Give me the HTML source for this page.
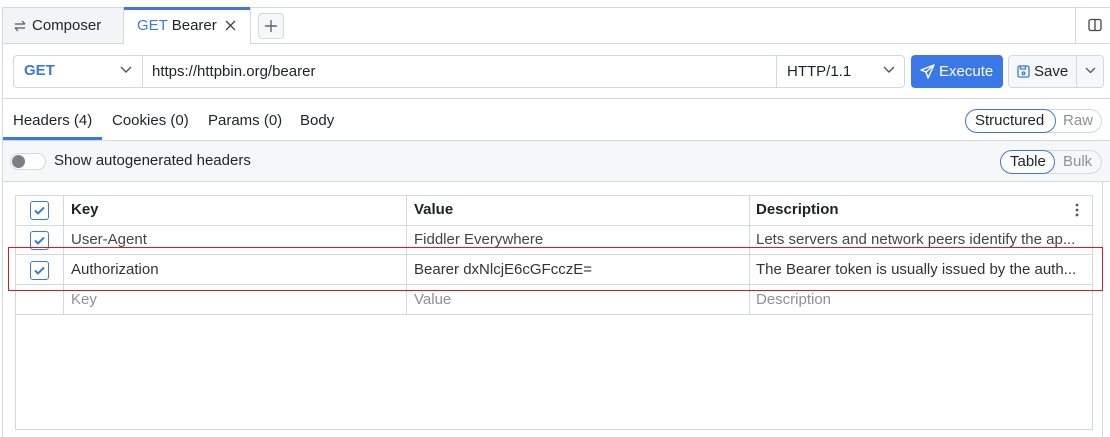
<!DOCTYPE html>
<html><head><style>
*{box-sizing:border-box;margin:0;padding:0}
body{width:1110px;height:437px;background:#fff;font-family:"Liberation Sans",sans-serif;font-size:15px;color:#1f2328;position:relative;overflow:hidden}
.a{position:absolute}
.hl{position:absolute;height:1px;background:#d3d7e0}
.vl{position:absolute;width:1px;background:#d3d7e0}
.t{position:absolute;white-space:nowrap;line-height:18px}
.cb{position:absolute;width:19px;height:19px;border:1.5px solid #3b78e7;border-radius:3px;background:#fff}
.cb svg{position:absolute;left:2px;top:2px}
.g{color:#8b919c}
</style></head><body>
<div class="vl" style="left:2px;top:7px;height:430px"></div>
<div class="hl" style="left:2px;top:7px;width:1108px"></div>
<div class="a" style="left:3px;top:8px;width:120px;height:36px;background:#f3f4f6"></div>
<div class="vl" style="left:123px;top:7px;height:37px"></div>
<div class="a" style="left:124px;top:7px;width:126px;height:3px;background:#3b78e7"></div>
<div class="vl" style="left:250px;top:7px;height:37px"></div>
<svg class="a" style="left:13px;top:19px" width="14" height="14" viewBox="0 0 14 14" fill="none" stroke="#555" stroke-width="1.2"><path d="M2 5h10M9 2l3 3M12 9H2M5 12L2 9"/></svg>
<div class="t" style="left:32px;top:17px">Composer</div>
<div class="t" style="left:137px;top:17px"><span style="color:#3b78e7">GET</span> Bearer</div>
<svg class="a" style="left:225px;top:20px" width="11" height="11" viewBox="0 0 11 11" stroke="#444" stroke-width="1.3"><path d="M1 1l9 9M10 1l-9 9"/></svg>
<div class="a" style="left:258px;top:13px;width:26px;height:26px;border:1px solid #d3d7e0;border-radius:4px;background:#f6f7f9"></div>
<svg class="a" style="left:264px;top:19px" width="14" height="14" viewBox="0 0 14 14" stroke="#666" stroke-width="1.4"><path d="M7 1v12M1 7h12"/></svg>
<div class="hl" style="left:250px;top:43px;width:860px"></div>
<div class="hl" style="left:2px;top:43px;width:121px"></div>
<div class="vl" style="left:1075px;top:7px;height:37px"></div>
<svg class="a" style="left:1088px;top:18px" width="14" height="14" viewBox="0 0 14 14" fill="none" stroke="#444" stroke-width="1.3"><rect x="1" y="1.5" width="12" height="11" rx="2"/><path d="M7 1.5v11"/></svg>
<div class="a" style="left:13px;top:55px;width:892px;height:33px;border:1px solid #d3d7e0;border-radius:4px"></div>
<div class="vl" style="left:142px;top:56px;height:32px"></div>
<div class="vl" style="left:776px;top:56px;height:32px"></div>
<div class="t" style="left:24px;top:62px;color:#3b78e7;font-weight:bold">GET</div>
<svg class="a" style="left:120px;top:66px" width="12" height="8" viewBox="0 0 12 8" fill="none" stroke="#555" stroke-width="1.4"><path d="M1 1l5 5 5-5"/></svg>
<div class="t" style="left:152px;top:63px">https://httpbin.org/bearer</div>
<div class="t" style="left:787px;top:63px">HTTP/1.1</div>
<svg class="a" style="left:883px;top:66px" width="12" height="8" viewBox="0 0 12 8" fill="none" stroke="#555" stroke-width="1.4"><path d="M1 1l5 5 5-5"/></svg>
<div class="a" style="left:911px;top:55px;width:92px;height:33px;background:#3b78e7;border-radius:4px"></div>
<svg class="a" style="left:920px;top:64px" width="15" height="15" viewBox="0 0 15 15" fill="none" stroke="#fff" stroke-width="1.4" stroke-linejoin="round"><path d="M14 1L1 6l5 2 2 6zM6 8l8-7"/></svg>
<div class="t" style="left:939px;top:63px;color:#fff">Execute</div>
<div class="a" style="left:1008px;top:55px;width:96px;height:33px;border:1px solid #d3d7e0;border-radius:4px;background:#f6f7f9"></div>
<div class="vl" style="left:1076px;top:56px;height:32px"></div>
<svg class="a" style="left:1017px;top:65px" width="13" height="13" viewBox="0 0 13 13" fill="none" stroke="#3b78e7" stroke-width="1.3"><rect x="1" y="1" width="11" height="11" rx="1.5"/><path d="M3.5 1v3h5V1"/><circle cx="6.5" cy="8.3" r="1.3"/></svg>
<div class="t" style="left:1034px;top:63px">Save</div>
<svg class="a" style="left:1085px;top:67px" width="11" height="7" viewBox="0 0 11 7" fill="none" stroke="#555" stroke-width="1.3"><path d="M1 1l4.5 4.5L10 1"/></svg>
<div class="hl" style="left:2px;top:98px;width:1108px"></div>
<div class="t" style="left:13px;top:112px">Headers (4)</div>
<div class="t" style="left:112px;top:112px">Cookies (0)</div>
<div class="t" style="left:208px;top:112px">Params (0)</div>
<div class="t" style="left:300px;top:112px">Body</div>
<div class="a" style="left:3px;top:137px;width:99px;height:3px;background:#3b78e7"></div>
<div class="a" style="left:965px;top:109px;width:137px;height:24px;border:1px solid #d3d7e0;border-radius:12px"></div>
<div class="a" style="left:965px;top:109px;width:91px;height:24px;border:1.5px solid #3b78e7;border-radius:12px;background:#fff"></div>
<div class="t" style="left:975px;top:112px">Structured</div>
<div class="t g" style="left:1063px;top:112px">Raw</div>
<div class="a" style="left:3px;top:140px;width:1107px;height:42px;background:#f6f7f9;border-top:1px solid #d3d7e0;border-bottom:1px solid #d3d7e0"></div>
<div class="a" style="left:10px;top:153px;width:36px;height:17px;border:1px solid #d3d7e0;border-radius:9px;background:#fff"></div>
<div class="a" style="left:12px;top:155px;width:13px;height:13px;border-radius:50%;background:#7a7f88"></div>
<div class="t" style="left:54px;top:152px">Show autogenerated headers</div>
<div class="a" style="left:1000px;top:150px;width:102px;height:24px;border:1px solid #d3d7e0;border-radius:12px"></div>
<div class="a" style="left:1000px;top:150px;width:55px;height:24px;border:1.5px solid #3b78e7;border-radius:12px;background:#fff"></div>
<div class="t" style="left:1010px;top:153px">Table</div>
<div class="t g" style="left:1063px;top:153px">Bulk</div>
<div class="a" style="left:15px;top:195px;width:1078px;height:235px;border:1px solid #d3d7e0"></div>
<div class="vl" style="left:1102px;top:182px;height:255px"></div>
<div class="hl" style="left:15px;top:225px;width:1078px"></div>
<div class="hl" style="left:15px;top:254px;width:1078px"></div>
<div class="hl" style="left:15px;top:284px;width:1078px"></div>
<div class="hl" style="left:15px;top:314px;width:1078px"></div>
<div class="vl" style="left:63px;top:195px;height:119px"></div>
<div class="vl" style="left:406px;top:195px;height:119px"></div>
<div class="vl" style="left:749px;top:195px;height:119px"></div>
<div class="cb" style="left:30px;top:201px"><svg width="13" height="13" viewBox="0 0 13 13" fill="none" stroke="#3b78e7" stroke-width="2"><path d="M2 6.5l3 3 6-6"/></svg></div>
<div class="cb" style="left:30px;top:231px"><svg width="13" height="13" viewBox="0 0 13 13" fill="none" stroke="#3b78e7" stroke-width="2"><path d="M2 6.5l3 3 6-6"/></svg></div>
<div class="cb" style="left:30px;top:261px"><svg width="13" height="13" viewBox="0 0 13 13" fill="none" stroke="#3b78e7" stroke-width="2"><path d="M2 6.5l3 3 6-6"/></svg></div>
<div class="t" style="left:71px;top:201px;font-weight:bold">Key</div>
<div class="t" style="left:414px;top:201px;font-weight:bold">Value</div>
<div class="t" style="left:756px;top:201px;font-weight:bold">Description</div>
<svg class="a" style="left:1075px;top:203px" width="4" height="14" viewBox="0 0 4 14" fill="#555"><circle cx="2" cy="2" r="1.4"/><circle cx="2" cy="7" r="1.4"/><circle cx="2" cy="12" r="1.4"/></svg>
<div class="t" style="left:71px;top:231px;color:#444">User-Agent</div>
<div class="t" style="left:414px;top:231px;color:#444">Fiddler Everywhere</div>
<div class="t" style="left:756px;top:231px;color:#444">Lets servers and network peers identify the ap...</div>
<div class="t" style="left:71px;top:261px;color:#333">Authorization</div>
<div class="t" style="left:414px;top:261px;color:#333">Bearer dxNlcjE6cGFcczE=</div>
<div class="t" style="left:756px;top:261px;color:#333">The Bearer token is usually issued by the auth...</div>
<div class="t g" style="left:71px;top:291px">Key</div>
<div class="t g" style="left:414px;top:291px">Value</div>
<div class="t g" style="left:756px;top:291px">Description</div>
<div class="a" style="left:8px;top:247px;width:1095px;height:44px;border:1px solid #e0191f"></div>
</body></html>
